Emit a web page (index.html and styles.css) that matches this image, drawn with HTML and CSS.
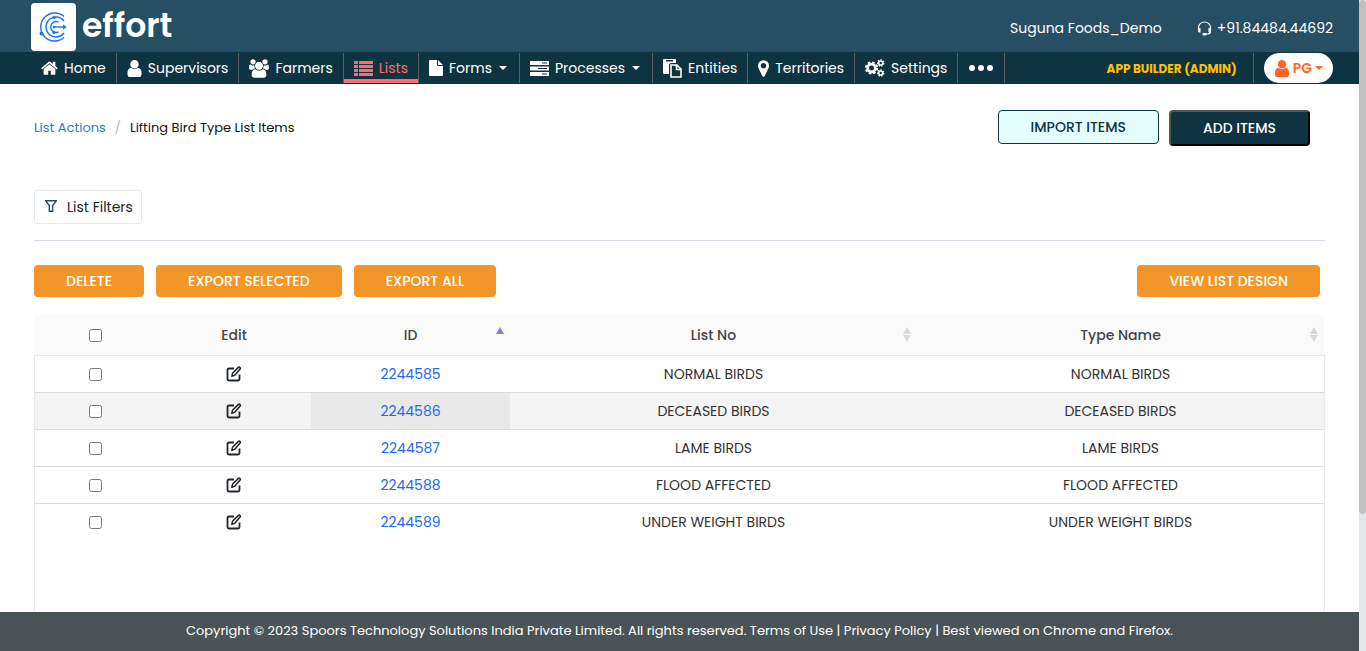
FILE: index.html
```
<!DOCTYPE html>
<html lang="en">
<head>
  <meta charset="UTF-8">
  <meta name="viewport" content="width=device-width, initial-scale=1.0">
  <title>effort - Lifting Bird Type List Items</title>
  <link rel="stylesheet" href="styles.css">
</head>
<body>
  <!-- Shared icons -->
  <svg class="sprite" aria-hidden="true">
    <symbol id="icon-user" viewBox="256 128 1280 1536">
      <path d="M1536 1399q0 109-62.500 187t-150.500 78h-854q-88 0-150.500-78t-62.500-187q0-85 8.500-160.500t31.500-152 58.500-131 94-89 134.500-34.500q131 128 313 128t313-128q76 0 134.500 34.500t94 89 58.500 131 31.500 152 8.500 160.500zm-256-887q0 159-112.500 271.500t-271.500 112.500-271.500-112.500-112.500-271.500 112.500-271.500 271.500-112.500 271.500 112.500 112.500 271.500z"/>
    </symbol>
    <symbol id="icon-edit" viewBox="0 0 16 16">
      <path d="M8 2.500H3Q1.500 2.500 1.500 4v9Q1.500 14.500 3 14.500h9Q13.500 14.500 13.500 13V8.500" fill="none" stroke="currentColor" stroke-width="1.800"/>
      <path d="M5.800 10.300l.7-3L12.400 1.400q.8-.6 1.600.1t.1 1.600L8.500 9.400z" fill="none" stroke="currentColor" stroke-width="1.500" stroke-linejoin="round"/>
    </symbol>
  </svg>

  <div class="page">
    <header class="topbar">
      <a class="brand" href="#">
        <svg class="brand-mark" viewBox="0 0 45 48" aria-hidden="true">
          <rect width="45" height="48" rx="4" fill="#fff"/>
          <g fill="none" stroke="#1a73f0" stroke-width="1.400">
            <path d="M33 13.500A14 14 0 1 0 33 34.500"/>
            <path d="M33 18A10 10 0 1 0 33 30"/>
            <path d="M27.500 19A5.500 5.500 0 1 0 27.500 29"/>
            <path d="M23 24h10"/>
          </g>
          <g fill="#1a73f0">
            <path d="M32 21.500l4 2.500-4 2.500z"/>
            <circle cx="10.500" cy="30.500" r="2"/>
            <circle cx="23" cy="14.500" r="1.600"/>
            <circle cx="23" cy="29.500" r="1.600"/>
            <circle cx="23" cy="24" r="1.300"/>
          </g>
        </svg>
        <span class="brand-name">effort</span>
      </a>
      <div class="contact">
        <span>Suguna Foods_Demo</span>
        <a class="phone" href="tel:+918448444692">
          <svg width="15" height="15" viewBox="0 0 15 15" aria-hidden="true">
            <path d="M1.500 8V6.500A6 5.500 0 0 1 13.500 6.500V10.500Q13.500 12.500 11 13H8" fill="none" stroke="#fff" stroke-width="1.200"/>
            <path d="M1 7h2.500v4.500H2Q1 11 1 9.500zM14 7h-2.500v4.500H13Q14 11 14 9.500z" fill="#fff"/>
            <rect x="5.500" y="12" width="4" height="2.500" rx="1" fill="#fff"/>
          </svg>
          <span>+91.84484.44692</span>
        </a>
      </div>
    </header>

    <nav class="navbar">
      <ul class="menu">
        <li><a href="#">
          <svg width="17" height="14" viewBox="64 224 1664 1312"><path d="M1472 992v480q0 26-19 45t-45 19h-384v-384h-256v384h-384q-26 0-45-19t-19-45v-480q0-1 .5-3t.5-3l575-474 575 474q1 2 1 6zm223-69l-62 74q-8 9-21 11h-3q-13 0-21-7l-692-577-692 577q-12 8-24 7-13-2-21-11l-62-74q-8-10-7-23.500t11-21.500l719-599q32-26 76-26t76 26l244 204v-195q0-14 9-23t23-9h192q14 0 23 9t9 23v408l219 182q10 8 11 21.500t-7 23.500z"/></svg>
          Home</a></li>
        <li><a href="#">
          <svg width="15" height="17"><use href="#icon-user"/></svg>
          Supervisors</a></li>
        <li><a href="#">
          <svg width="20" height="19" viewBox="64 0 1920 1792"><path d="M657 896q-162 5-265 128h-134q-82 0-138-40.500t-56-118.500q0-353 124-353 6 0 43.500 21t97.500 42.500 119 21.500q67 0 133-23-5 37-5 66 0 139 81 256zm1071 637q0 120-73 189.500t-194 69.500h-874q-121 0-194-69.500t-73-189.500q0-53 3.500-103.500t14-109 26.500-108.500 43-97.500 62-81 85.500-53.500 111.500-20q10 0 43 21.500t73 48 107 48 135 21.500 135-21.500 107-48 73-48 43-21.500q61 0 111.500 20t85.500 53.500 62 81 43 97.500 26.500 108.500 14 109 3.500 103.500zm-1024-1277q0 106-75 181t-181 75-181-75-75-181 75-181 181-75 181 75 75 181zm704 384q0 159-112.500 271.500t-271.500 112.500-271.500-112.500-112.500-271.500 112.500-271.500 271.500-112.500 271.500 112.500 112.500 271.500zm576 225q0 78-56 118.500t-138 40.500h-134q-103-123-265-128 81-117 81-256 0-29-5-66 66 23 133 23 59 0 119-21.500t97.500-42.500 43.500-21q124 0 124 353zm-128-609q0 106-75 181t-181 75-181-75-75-181 75-181 181-75 181 75 75 181z"/></svg>
          Farmers</a></li>
        <li class="active"><a href="#">
          <svg width="19" height="15" viewBox="0 0 19 15"><path d="M0 0h4v3H0zM5 0h14v3H5zM0 4h4v3H0zM5 4h14v3H5zM0 8h4v3H0zM5 8h14v3H5zM0 12h4v3H0zM5 12h14v3H5z"/></svg>
          Lists</a></li>
        <li><a href="#">
          <svg width="14" height="16" viewBox="0 0 14 16"><path d="M1 0h7v5q0 1 1 1h5v9q0 1-1 1H1q-1 0-1-1V1q0-1 1-1zM9 0l5 5H9z"/></svg>
          Forms <span class="caret"></span></a></li>
        <li><a href="#">
          <svg width="19" height="15" viewBox="0 0 19 15"><path fill-rule="evenodd" d="M0 0h19v4H0zM12 1.500v1h5v-1zM0 5.500h19v4H0zM8 7v1h9V7zM0 11h19v4H0zM12 12.500v1h5v-1z"/></svg>
          Processes <span class="caret"></span></a></li>
        <li><a href="#">
          <svg width="19" height="19" viewBox="0 0 19 19"><path fill-rule="evenodd" d="M1 0h11q1 0 1 1v3H8Q6 4 6 6v9H1q-1 0-1-1V1q0-1 1-1zM3 1v1.500h7V1z"/><path d="M8 6h6l4 4v8H8zM13.500 6v4.500H18" fill="none" stroke="currentColor" stroke-width="1.600"/></svg>
          Entities</a></li>
        <li><a href="#">
          <svg width="11" height="17" viewBox="384 128 1024 1536"><path d="M1152 640q0-106-75-181t-181-75-181 75-75 181 75 181 181 75 181-75 75-181zm256 0q0 109-33 179l-364 774q-16 33-47.500 52t-67.500 19-67.500-19-46.500-52l-365-774q-33-70-33-179 0-212 150-362t362-150 362 150 150 362z"/></svg>
          Territories</a></li>
        <li><a href="#">
          <svg width="20" height="18" viewBox="0 0 20 18"><g fill="none" stroke="currentColor"><circle cx="6.500" cy="9" r="3.900" stroke-width="2.800"/><circle cx="6.500" cy="9" r="5.600" stroke-width="2" stroke-dasharray="2.500 1.900"/><circle cx="15.700" cy="4" r="2" stroke-width="1.600"/><circle cx="15.700" cy="4" r="3.100" stroke-width="1.300" stroke-dasharray="1.500 1.280"/><circle cx="15.700" cy="14" r="2" stroke-width="1.600"/><circle cx="15.700" cy="14" r="3.100" stroke-width="1.300" stroke-dasharray="1.500 1.280"/></g></svg>
          Settings</a></li>
        <li><a href="#" aria-label="More">
          <svg width="26" height="8" viewBox="0 0 26 8"><circle cx="4" cy="4" r="3"/><circle cx="13" cy="4" r="3"/><circle cx="22" cy="4" r="3"/></svg></a></li>
      </ul>
      <div class="account">
        <a class="app-builder" href="#">APP BUILDER (ADMIN)</a>
        <button class="profile" type="button">
          <svg width="16" height="17" aria-hidden="true"><use href="#icon-user"/></svg>
          <span>PG</span>
          <span class="caret"></span>
        </button>
      </div>
    </nav>

    <main class="content">
      <div class="heading">
        <div class="breadcrumb">
          <a href="#">List Actions</a>
          <span class="slash">/</span>
          <span>Lifting Bird Type List Items</span>
        </div>
        <div class="actions">
          <button class="btn-import" type="button">IMPORT ITEMS</button>
          <button class="btn-add" type="button">ADD ITEMS</button>
        </div>
      </div>

      <div class="filters">
        <button class="btn-filter" type="button">
          <svg width="12" height="12" viewBox="0 0 12 12" aria-hidden="true"><path d="M.8 .8h10.400L7.700 5.500v5.700H4.300V5.500z" fill="none" stroke="#264f64" stroke-width="1.400"/></svg>
          <span>List Filters</span>
        </button>
      </div>

      <div class="toolbar">
        <button class="btn" type="button">DELETE</button>
        <button class="btn" type="button">EXPORT SELECTED</button>
        <button class="btn" type="button">EXPORT ALL</button>
        <button class="btn btn-design" type="button">VIEW LIST DESIGN</button>
      </div>

      <div class="table-wrap">
        <table>
          <colgroup>
            <col class="col-check">
            <col class="col-edit">
            <col class="col-id">
            <col>
            <col>
          </colgroup>
          <thead>
            <tr>
              <th><input type="checkbox" aria-label="Select all"></th>
              <th>Edit</th>
              <th class="sorted">ID</th>
              <th class="sortable">List No</th>
              <th class="sortable">Type Name</th>
            </tr>
          </thead>
          <tbody>
            <tr>
              <td><input type="checkbox" aria-label="Select 2244585"></td>
              <td><a class="edit" href="#" aria-label="Edit"><svg width="16" height="16"><use href="#icon-edit"/></svg></a></td>
              <td><a href="#">2244585</a></td>
              <td>NORMAL BIRDS</td>
              <td>NORMAL BIRDS</td>
            </tr>
            <tr class="hovered">
              <td><input type="checkbox" aria-label="Select 2244586"></td>
              <td><a class="edit" href="#" aria-label="Edit"><svg width="16" height="16"><use href="#icon-edit"/></svg></a></td>
              <td class="current"><a href="#">2244586</a></td>
              <td>DECEASED BIRDS</td>
              <td>DECEASED BIRDS</td>
            </tr>
            <tr>
              <td><input type="checkbox" aria-label="Select 2244587"></td>
              <td><a class="edit" href="#" aria-label="Edit"><svg width="16" height="16"><use href="#icon-edit"/></svg></a></td>
              <td><a href="#">2244587</a></td>
              <td>LAME BIRDS</td>
              <td>LAME BIRDS</td>
            </tr>
            <tr>
              <td><input type="checkbox" aria-label="Select 2244588"></td>
              <td><a class="edit" href="#" aria-label="Edit"><svg width="16" height="16"><use href="#icon-edit"/></svg></a></td>
              <td><a href="#">2244588</a></td>
              <td>FLOOD AFFECTED</td>
              <td>FLOOD AFFECTED</td>
            </tr>
            <tr>
              <td><input type="checkbox" aria-label="Select 2244589"></td>
              <td><a class="edit" href="#" aria-label="Edit"><svg width="16" height="16"><use href="#icon-edit"/></svg></a></td>
              <td><a href="#">2244589</a></td>
              <td>UNDER WEIGHT BIRDS</td>
              <td>UNDER WEIGHT BIRDS</td>
            </tr>
          </tbody>
        </table>
      </div>
    </main>

    <footer class="footer">
      <p>Copyright © 2023 Spoors Technology Solutions India Private Limited. All rights reserved. <a href="#">Terms of Use</a> | <a href="#">Privacy Policy</a> | Best viewed on Chrome and Firefox.</p>
    </footer>
  </div>

  <div class="scrollbar"><div class="thumb"></div></div>
</body>
</html>
```
FILE: styles.css
```
* {
  box-sizing: border-box;
}
body {
  margin: 0;
  height: 100vh;
  display: flex;
  overflow: hidden;
  font-family: Poppins, Inter, sans-serif;
  font-size: 14px;
  color: #212529;
  background: #fff;
}
a {
  color: inherit;
  text-decoration: none;
}
button {
  font-family: inherit;
  font-size: 14px;
  cursor: pointer;
}
svg {
  fill: currentColor;
  flex-shrink: 0;
}
.sprite {
  display: none;
}
.page {
  flex: 1;
  min-width: 0;
  display: flex;
  flex-direction: column;
}

/* Header */
.topbar {
  height: 52px;
  flex-shrink: 0;
  display: flex;
  justify-content: space-between;
  padding: 0 26px 0 31px;
  background: #264f64;
  color: #fff;
}
.brand {
  display: flex;
  align-items: center;
  gap: 6px;
  padding-top: 2px;
}
.brand-mark {
  width: 45px;
  height: 48px;
}
.brand-name {
  font-size: 33px;
  font-weight: 600;
  line-height: 40px;
  padding-bottom: 2px;
}
.contact {
  display: flex;
  align-items: center;
  gap: 35px;
  padding-top: 4px;
}
.phone {
  display: flex;
  align-items: center;
  gap: 5px;
}

/* Navigation */
.navbar {
  height: 32px;
  flex-shrink: 0;
  display: flex;
  justify-content: space-between;
  padding: 0 26px 0 31px;
  background: #0e3341;
  color: #fff;
}
.menu {
  display: flex;
  margin: 0;
  padding: 1px 0;
  list-style: none;
}
.menu li {
  display: flex;
  border-right: 1px solid #5a5f61;
}
.menu a {
  display: flex;
  align-items: center;
  gap: 6px;
  padding: 0 10px;
}
.menu .active a {
  color: #ff6b6b;
  border-bottom: 4px solid #ff6b6b;
  padding-top: 4px;
}
.caret {
  border: 4px solid transparent;
  border-top-color: currentColor;
  border-bottom: 0;
}
.menu .caret {
  margin: 0 2px 0 1px;
}
.account {
  display: flex;
  padding: 1px 0;
}
.app-builder {
  display: flex;
  align-items: center;
  padding: 2px 16px 0 0;
  border-right: 1px solid #5a5f61;
  margin-right: 10px;
  color: #ffc107;
  font-size: 12px;
  font-weight: 700;
}
.profile {
  display: flex;
  align-items: center;
  gap: 3px;
  padding: 0 10px;
  border: 0;
  border-radius: 15px;
  background: #fff;
  color: #ff6529;
  font-weight: 600;
}

/* Content */
.content {
  flex: 1;
  min-height: 0;
  overflow: hidden;
  display: flex;
  flex-direction: column;
  padding: 26px 34px 0;
}
.heading {
  display: flex;
  justify-content: space-between;
  padding-right: 15px;
}
.breadcrumb {
  display: flex;
  align-items: center;
  gap: 9px;
  height: 36px;
  font-size: 13px;
  color: #111;
}
.breadcrumb a {
  color: #3c78b4;
}
.slash {
  color: #bbb;
}
.actions {
  display: flex;
  align-items: flex-start;
  gap: 10px;
}
.btn-import {
  height: 34px;
  padding: 0 32px;
  border: 1px solid #0e3341;
  border-radius: 4px;
  background: #e5ffff;
  color: #0e3341;
  font-weight: 500;
}
.btn-add {
  height: 36px;
  padding: 0 32px;
  border: 2px outset #000;
  border-radius: 4px;
  background: #0e3341;
  color: #fff;
  font-weight: 500;
}
.filters {
  margin-top: 44px;
  padding-bottom: 16px;
  border-bottom: 1px solid #d5dbea;
}
.btn-filter {
  display: flex;
  align-items: center;
  gap: 10px;
  height: 34px;
  padding: 0 8px 0 10px;
  border: 1px solid #e9e9f1;
  border-radius: 3px;
  background: #fff;
  color: #212529;
}
.btn-filter svg {
  margin-bottom: 2px;
}
.toolbar {
  display: flex;
  gap: 12px;
  margin-top: 24px;
  padding-right: 5px;
}
.btn {
  height: 32px;
  padding: 0 32px;
  border: 0;
  border-radius: 4px;
  background: #f29727;
  color: #fff;
  font-weight: 500;
}
.btn-design {
  margin-left: auto;
}

/* Table */
.table-wrap {
  flex: 1;
  margin-top: 18px;
  border: 1px solid;
  border-width: 0 1px;
  border-image: linear-gradient(transparent 40px, #e9e9f1 40px) 1;
}
table {
  width: 100%;
  table-layout: fixed;
  border-collapse: collapse;
}
.col-check {
  width: 122px;
}
.col-edit {
  width: 154px;
}
.col-id {
  width: 199px;
}
th {
  height: 40px;
  padding: 2px 0 0;
  background: #fafafa;
  border-bottom: 1px solid #e9e9f1;
  color: #444;
  font-weight: 500;
}
td {
  height: 37px;
  padding: 2px 0 0;
  text-align: center;
  border-bottom: 1px solid #dcdce0;
  color: #333;
}
th:first-child,
td:first-child {
  padding-right: 2px;
}
tbody tr:last-child td {
  border-bottom: 0;
}
td a {
  color: #2468f2;
}
td .edit {
  color: #212529;
}
input {
  display: block;
  margin: 0 auto;
}
td svg {
  display: block;
  margin: 0 auto 2px;
}
.hovered {
  background: #f4f4f4;
}
.current {
  background: #e9e9e9;
}
/* sort arrows */
.sortable,
.sorted {
  position: relative;
}
.sortable::before,
.sortable::after,
.sorted::before {
  content: "";
  position: absolute;
  right: 6px;
  top: 12px;
  border: 4px solid transparent;
  border-top: 0;
  border-bottom: 7px solid #d8d8d8;
}
.sorted::before {
  border-bottom-color: #7d7de0;
}
.sortable::after {
  top: 20px;
  border-top: 7px solid #d8d8d8;
  border-bottom: 0;
}

/* Footer */
.footer {
  height: 39px;
  flex-shrink: 0;
  display: flex;
  align-items: center;
  justify-content: center;
  padding-bottom: 2px;
  background: #4a5456;
  color: #fff;
  font-size: 13px;
}
.footer p {
  margin: 0;
}

/* Scrollbar */
.scrollbar {
  width: 7px;
  background: #e6e7e9;
}
.thumb {
  height: 79%;
  border-radius: 4px;
  background: #c1c1c1;
}
```
